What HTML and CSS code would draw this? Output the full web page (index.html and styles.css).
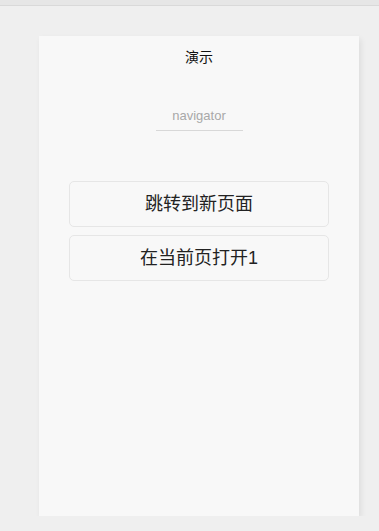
FILE: index.html
```html
<!DOCTYPE html>
<html lang="zh">
<head>
    <meta charset="UTF-8">
    <title>演示</title>
    <link rel="stylesheet" href="styles.css">
</head>
<body>
<div class="topbar"></div>
<div class="phone">
    <div class="title">演示</div>
    <div class="tag"><span>navigator</span></div>
    <div class="btns">
        <div class="btn">跳转到新页面</div>
        <div class="btn">在当前页打开1</div>
    </div>
</div>
</body>
</html>
```
FILE: styles.css
```css
html, body{
    margin: 0;
    padding: 0;
    background-color: #efefef;
    font-family: "Liberation Sans", "Noto Sans CJK SC", sans-serif;
}
.topbar{
    height: 5px;
    background-color: #e6e6e6;
    border-bottom: 1px solid #d9d9d9;
}
.phone{
    width: 320px;
    height: 480px;
    margin: 30px 0 0 39px;
    background-color: #f8f8f8;
    box-shadow: 2px 3px 6px rgba(0, 0, 0, 0.08);
    box-sizing: border-box;
    padding-top: 11px;
}
.title{
    text-align: center;
    font-size: 14px;
    line-height: 20px;
    color: #111111;
}
.tag{
    margin-top: 39px;
    text-align: center;
}
.tag span{
    display: inline-block;
    width: 87px;
    font-size: 13px;
    line-height: 18px;
    color: #a8a8a8;
    padding-bottom: 5px;
    border-bottom: 1px solid #d8d8d8;
}
.btns{
    margin: 50px 30px 0 30px;
}
.btn{
    height: 46px;
    line-height: 44px;
    box-sizing: border-box;
    border: 1px solid #e6e6e6;
    border-radius: 5px;
    text-align: center;
    font-size: 18px;
    color: #222222;
    margin-bottom: 8px;
}
```
